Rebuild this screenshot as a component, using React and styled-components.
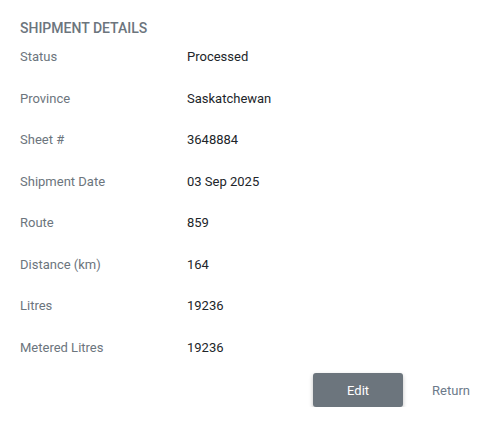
import React from 'react';
import styled, { createGlobalStyle } from 'styled-components';

const GlobalStyle = createGlobalStyle`
    body {
        margin: 0;
        background: #fff;
        font-family: Roboto, 'Noto Sans', sans-serif;
    }
`;

const Panel = styled.div`
    width: 492px;
    padding: 19px 20px 0 20px;
    box-sizing: border-box;
`;

const Heading = styled.h6`
    margin: 0 0 11px 0;
    font-size: 14px;
    font-weight: 500;
    color: #6c757d;
    text-transform: uppercase;
    line-height: 18px;
`;

const Row = styled.div`
    display: grid;
    grid-template-columns: 167px 1fr;
    height: 41.5px;
    font-size: 13px;
    line-height: 18px;
`;

const Label = styled.div`
    color: #6c757d;
`;

const Value = styled.div`
    color: #212529;
`;

const Actions = styled.div`
    display: flex;
    justify-content: flex-end;
    align-items: center;
    gap: 29px;
    margin-top: -7px;
    padding-right: 2px;
`;

const EditButton = styled.button`
    width: 90px;
    height: 34px;
    border: none;
    border-radius: 3px;
    background: #6c757d;
    color: #fff;
    font-family: Roboto, sans-serif;
    font-size: 13px;
    box-shadow: 0 2px 4px rgba(0, 0, 0, 0.25);
    cursor: pointer;
`;

const ReturnLink = styled.a`
    color: #6c7a8a;
    font-family: Roboto, sans-serif;
    font-size: 13px;
    text-decoration: none;
    cursor: pointer;
`;

const rows = [
    ['Status', 'Processed'],
    ['Province', 'Saskatchewan'],
    ['Sheet #', '3648884'],
    ['Shipment Date', '03 Sep 2025'],
    ['Route', '859'],
    ['Distance (km)', '164'],
    ['Litres', '19236'],
    ['Metered Litres', '19236'],
];

const App = () => {
    return (
        <>
            <GlobalStyle />
            <Panel>
                <Heading>Shipment Details</Heading>
                {rows.map(([label, value]) => (
                    <Row key={label}>
                        <Label>{label}</Label>
                        <Value>{value}</Value>
                    </Row>
                ))}
                <Actions>
                    <EditButton>Edit</EditButton>
                    <ReturnLink>Return</ReturnLink>
                </Actions>
            </Panel>
        </>
    );
};

export default App;
